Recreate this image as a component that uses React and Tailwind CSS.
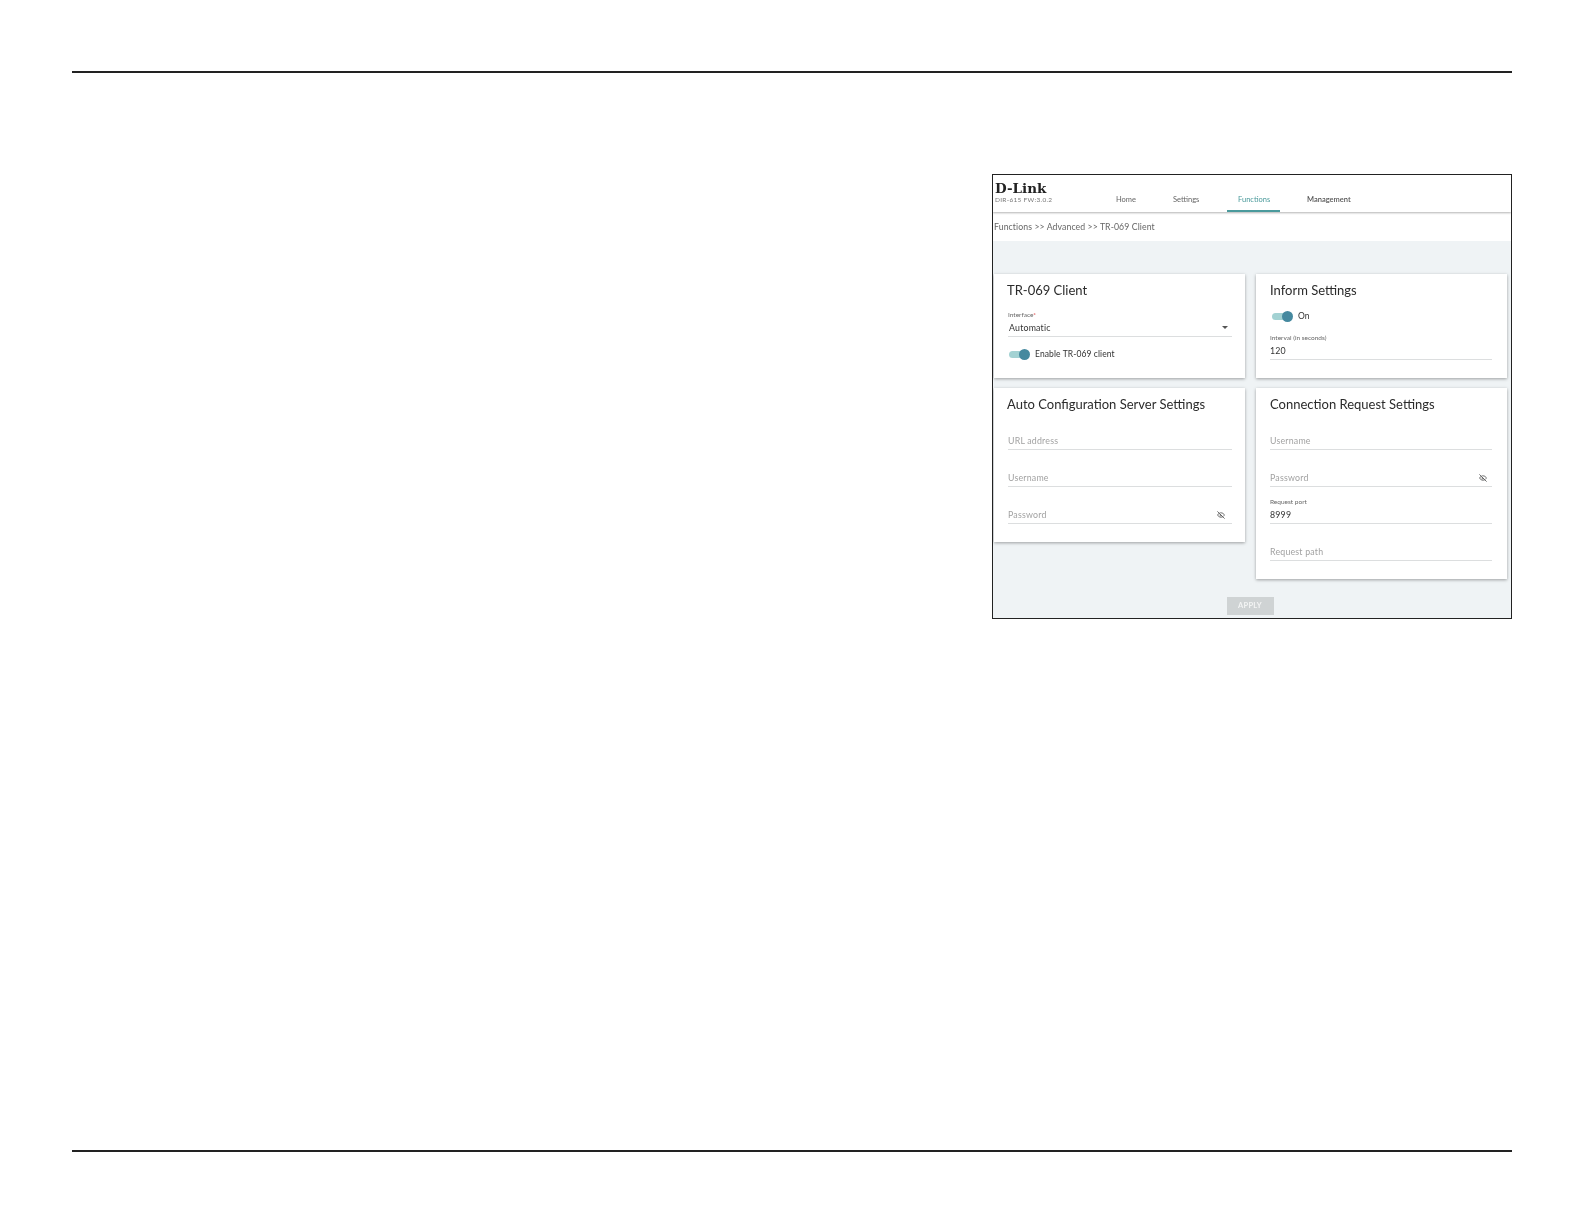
import React from 'react';
import { EyeOff } from 'lucide-react';

const Toggle = () => (
  <div className="relative w-[21px] h-[11px] flex items-center">
    <div className="w-[20px] h-[7px] rounded-full bg-[#a3d2d3]" />
    <div className="absolute right-0 top-0 w-[11px] h-[11px] rounded-full bg-[#45899f]" />
  </div>
);

// underlined input: floating label + value, or just a grey placeholder
const Field = ({ label, required, value, placeholder, icon, caret, height = 'h-[37px]', indent, tightIcon }) => (
  <div className={`${height} flex flex-col justify-end`}>
    {label && (
      <div className="h-[8px] mb-[2px] text-[6.5px] leading-[8px] text-[#666]">
        {label}
        {required && <span className="text-[#d33]">*</span>}
      </div>
    )}
    <div className="h-[16px] pb-[2px] border-b border-[#dcdedf] flex items-center justify-between">
      <span
        className={`text-[8.8px] leading-[12px] tracking-[0.2px] ${indent ? 'pl-[1px]' : ''} ${
          placeholder ? 'text-[#a2a2a2]' : 'text-[#333]'
        }`}
      >
        {placeholder || value}
      </span>
      {icon && <EyeOff size={8} strokeWidth={2.5} className={`text-[#555] ${tightIcon ? 'mr-[5px]' : 'mr-[7px]'}`} />}
      {caret && <div className="w-0 h-0 mr-[4px] border-x-[3px] border-x-transparent border-t-[3px] border-t-[#555]" />}
    </div>
  </div>
);

const Card = ({ title, right, children }) => (
  <div className={`bg-white shadow-[0_1px_3px_rgba(0,0,0,0.35)] pt-[9px] pb-[18px] ${right ? 'pl-[14px] pr-[15px]' : 'pl-[13px] pr-[13px]'}`}>
    <h2 className="h-[16px] text-[13px] leading-[15px] text-[#2b2b2b]">{title}</h2>
    {children}
  </div>
);

const RouterPage = () => (
  <div className="w-[520px] h-[445px] border border-[#222] bg-[#eff3f5] flex flex-col overflow-hidden blur-[0.4px] font-['Lato',sans-serif]">
    {/* Header */}
    <div className="shrink-0 h-[37px] bg-white shadow-[0_1px_2px_rgba(0,0,0,0.3)] flex relative z-10 pl-[2px]">
      <div className="w-[121px] pt-[3px]">
        <div className="h-[17px] font-['DejaVu_Serif',serif] font-bold text-[13.5px] leading-[21px] text-[#222]">D-Link</div>
        <div className="text-[6.5px] leading-[8px] tracking-[0.3px] text-[#777] mt-[1px]">DIR-615 FW:3.0.2</div>
      </div>
      <div className="flex text-[7.5px] leading-[10px] pt-[20px]">
        <span className="w-[57px] text-[#666]">Home</span>
        <span className="w-[65px] text-[#666]">Settings</span>
        <div className="relative w-[69px] text-[#4c9b9c]">
          <span>Functions</span>
          <div className="absolute left-[-11px] bottom-0 w-[53px] h-[2px] bg-[#4a9a9c]" />
        </div>
        <span className="font-semibold text-[#555]">Management</span>
      </div>
    </div>

    {/* Breadcrumb */}
    <div className="shrink-0 h-[29px] bg-white pl-[1px] flex items-center text-[8.7px] tracking-[0.1px] text-[#666]">
      Functions &gt;&gt; Advanced &gt;&gt; TR-069 Client
    </div>

    {/* Content */}
    <div className="flex-1 pt-[33px] pl-[1px] pr-[3px]">
      <div className="grid grid-cols-[251px_251px] gap-x-[11px]">
        <div className="flex flex-col gap-[10px]">
          <Card title="TR-069 Client">
            <div className="pl-[1px]">
              <Field label="Interface" required value="Automatic" caret indent height="h-[38px]" />
            </div>
            <div className="flex items-center gap-[5px] pl-[2px] mt-[11px]">
              <Toggle />
              <span className="text-[8.5px] leading-[12px] tracking-[0.1px] text-[#333]">Enable TR-069 client</span>
            </div>
          </Card>
          <Card title="Auto Configuration Server Settings">
            <div className="pl-[1px]">
              <Field placeholder="URL address" />
              <Field placeholder="Username" />
              <Field placeholder="Password" icon />
            </div>
          </Card>
        </div>
        <div className="flex flex-col gap-[10px]">
          <Card title="Inform Settings" right>
            <div className="flex items-center gap-[5px] pl-[2px] mt-[11px]">
              <Toggle />
              <span className="text-[8.5px] leading-[12px] text-[#333]">On</span>
            </div>
            <Field label="Interval (in seconds)" value="120" height="h-[38px]" />
          </Card>
          <Card title="Connection Request Settings" right>
            <Field placeholder="Username" />
            <Field placeholder="Password" icon tightIcon />
            <Field label="Request port" value="8999" />
            <Field placeholder="Request path" />
          </Card>
        </div>
      </div>
      <div className="flex justify-center pr-[2px] mt-[18px]">
        <div className="w-[47px] h-[18px] bg-[#cfd3d4] flex items-center justify-center text-[7.5px] font-bold tracking-[0.3px] text-[#f3f4f4]">
          APPLY
        </div>
      </div>
    </div>
  </div>
);

const App = () => (
  <div className="w-[1584px] h-[1224px] bg-white px-[72px] pt-[71px] overflow-hidden">
    <div className="h-[2px] bg-[#222]" />
    <div className="flex justify-end pt-[101px] h-[1077px]">
      <RouterPage />
    </div>
    <div className="h-[2px] bg-[#222]" />
  </div>
);

export default App;
